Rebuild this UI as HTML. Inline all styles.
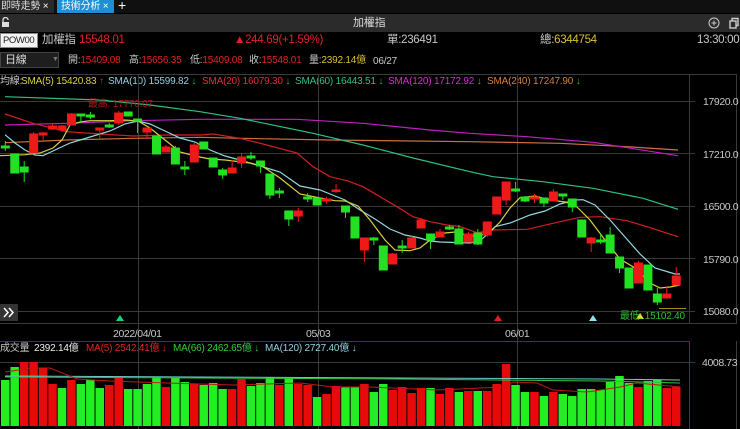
<!DOCTYPE html>
<html><head><meta charset="utf-8"><style>
*{margin:0;padding:0;box-sizing:border-box}
body{width:740px;height:429px;background:#000;overflow:hidden;font-family:"Liberation Sans","Noto Sans CJK TC",sans-serif;font-size:10px;letter-spacing:-0.2px;color:#c8c8c8;position:relative}
.a{position:absolute;white-space:nowrap;line-height:13px}
.r{color:#e02424}.y{color:#d8c030}.g{color:#20c040}
.b{font-size:11.5px;letter-spacing:-0.3px}
</style></head><body>
<div class="a" style="left:0;top:0;width:740px;height:13px;background:#101010"></div>
<div class="a" style="left:0;top:0;width:54px;height:13px;background:#2a2a2a;color:#ddd;padding-left:1px">即時走勢 <span style="color:#fff">×</span></div>
<div class="a" style="left:57px;top:0;width:57px;height:13px;background:#1d8fd2;color:#fff;padding-left:4px">技術分析 ×</div>
<div class="a" style="left:118px;top:-1px;color:#fff;font-size:14px">+</div>
<div class="a" style="left:0;top:14px;width:740px;height:18px;background:#2b2b2b"></div>
<svg class="a" style="left:1px;top:17px" width="9" height="11"><rect x="1" y="5" width="7" height="5" fill="#ddd"/><path d="M2 5V3a2.5 2.5 0 0 1 5 0" stroke="#ddd" fill="none" stroke-width="1.3"/></svg>
<div class="a" style="left:353px;top:17px;color:#ddd;font-size:11px">加權指</div>
<svg class="a" style="left:708px;top:17px" width="32" height="12"><circle cx="6" cy="6" r="5" stroke="#ccc" fill="none"/><path d="M3.5 6h5M6 3.5v5" stroke="#ccc"/><rect x="22" y="4" width="6" height="7" stroke="#ccc" fill="none" stroke-width="1.4"/><path d="M24 4V1.5h6v7h-2" stroke="#ccc" fill="none" stroke-width="1.4"/></svg>
<div class="a" style="left:0;top:33px;width:38px;height:15px;background:#f4f4f4;border:1px solid #888;color:#222;padding-left:2px;line-height:13px;font-size:9.5px;letter-spacing:-0.4px">POW00</div>
<div class="a b" style="left:42px;top:34px">加權指</div>
<div class="a b r" style="left:79px;top:34px">15548.01</div>
<div class="a b r" style="left:234px;top:34px">▲244.69(+1.59%)</div>
<div class="a b" style="left:387px;top:34px">單:236491</div>
<div class="a b" style="left:540px;top:34px">總:<span class="y">6344754</span></div>
<div class="a b" style="left:697px;top:34px">13:30:00</div>
<div class="a" style="left:0;top:52px;width:59px;height:16px;background:#1e1e1e;border:1px solid #444;padding-left:4px;line-height:14px;color:#ddd;font-size:11px">日線<span style="position:absolute;left:51px;color:#777;font-size:7px">▼</span></div>
<div class="a" style="left:68px;top:54px">開:<span class="r">15409.08</span></div>
<div class="a" style="left:129px;top:54px">高:<span class="r">15656.35</span></div>
<div class="a" style="left:190px;top:54px">低:<span class="r">15409.08</span></div>
<div class="a" style="left:249px;top:54px">收:<span class="r">15548.01</span></div>
<div class="a" style="left:309px;top:54px">量:<span class="y">2392.14億</span></div>
<div class="a" style="left:373px;top:55px">06/27</div>
<div class="a" style="left:0;top:75px">均線:</div>
<div class="a" style="left:21px;top:75px;color:#d8d040">SMA(5) 15420.83 <span class="r">↑</span></div>
<div class="a" style="left:108px;top:75px;color:#90d0e0">SMA(10) 15599.82 <span class="g">↓</span></div>
<div class="a" style="left:202px;top:75px;color:#e03030">SMA(20) 16079.30 <span class="g">↓</span></div>
<div class="a" style="left:295px;top:75px;color:#30c080">SMA(60) 16443.51 <span class="g">↓</span></div>
<div class="a" style="left:388px;top:75px;color:#d030d0">SMA(120) 17172.92 <span class="g">↓</span></div>
<div class="a" style="left:487px;top:75px;color:#d08040">SMA(240) 17247.90 <span class="g">↓</span></div>

<svg class="a" style="left:0;top:0" width="740" height="429">
<g stroke="#3a3a3a" stroke-width="1">
<path d="M0 74.5H737M0 101.5H695M0 153.5H695M0 206.5H695M0 258.5H695M0 311.5H695M0 323.5H737M138.5 74V429M318.5 74V429M517.5 74V429M0 362.5H695"/>
<path d="M689.5 74V324M736.5 74V324"/>
</g>
<path d="M0 341.5H689.5V429" stroke="#6a1e5a" fill="none"/>
<path d="M736.5 341V429" stroke="#3a3a3a"/>
<g fill="none" stroke-width="1.2">
<polyline stroke="#d07040" points="5,142.7 67,140 133,138.3 200,137.3 240,138.3 330,140 470,141.7 560,143.3 627,146.7 678,150"/>
<polyline stroke="#c020c0" points="5,125 67,123.3 133,120.7 200,119.3 297,119.3 363,123.3 430,130 470,133.3 527,136.7 593,142.3 678,155.7"/>
<polyline stroke="#30c080" points="5,96.7 100,100 150,105 200,111.7 240,118.3 313,133.3 363,145 413,158 470,171.7 493,176.7 543,181.7 593,188.3 643,198.3 678,209.3"/>
<polyline stroke="#d02020" points="5,114 33,123.3 67,131.7 100,134 133,136 167,135 200,135 213,134 240,138.3 263,144 297,153 313,166.7 330,176.7 347,180.7 363,186.7 380,196.7 397,206.7 413,216.7 430,221.7 447,225 460,226.5 477,232.7 493,230 527,229.3 560,221.7 580,217.3 600,216.7 627,220.7 647,226.7 678,236.7"/>
<polyline stroke="#90d8e0" points="5,134.7 15,143 25,150 35,155 43,155.7 55,150 70,143 90,137 110,131 125,124 138,121 150,124 165,131 180,138 195,142 210,150 225,156 240,160 260,166 280,172 300,186 320,190 335,196 345,200 360,210 375,219 390,229 405,235 420,238 430,241 440,242 470,243 480,241 495,226.7 510,223 530,215 545,211 560,204 575,200 583,199.7 595,205 610,220 625,237 640,254 655,268 675,274 680,274"/>
<polyline stroke="#d8d040" points="0,155.7 25,154.7 40,153 53,148 62,140 70,125 80,122 90,120.7 110,120.7 125,120 138,121 150,128 165,140 180,152 195,156 210,159 225,160 250,163 262,166 280,178 300,194 315,197 335,200.7 345,201 358,206 370,220 385,240 395,250 410,250.7 420,248 430,240 445,233 455,232 470,236 480,235.7 490,232 500,222 510,208 520,197.7 535,196 550,200 565,202 575,205 590,220 605,240 620,259 635,268 650,283 660,288 670,287 680,285"/>
</g>
<g stroke-width="1">
<g stroke="#22e022" fill="#22e022">
<path d="M5.3 141V151M14.75 154V173M24.2 161V182M80.9 114V123M90.35 112V119M109.25 123V128M128.15 112V116M137.6 119V133M156.5 136V154M175.4 146V164M184.85 161V175M203.75 142V149M213.2 158V167M222.65 168V179M251 152V160M260.45 161V173M269.9 174V199M279.35 188V198M288.8 211V226M307.7 193V202M317.15 198V205M345.5 206V218M354.95 217V238M373.85 237V245M383.3 246V270M402.2 240V253M430.55 234V249M449.45 225V230M458.9 225V244M477.8 229V245M515.6 182V192M525.05 196V202M543.95 198V207M562.85 194V200M572.3 199V212M581.75 220V237M600.65 234V244M610.1 227V253M619.55 257V273M629 268V288M647.9 265V290M657.35 288V305"/>
<rect x="1.3" y="146" width="8" height="2"/><rect x="10.75" y="154" width="8" height="19"/><rect x="20.2" y="167" width="8" height="5"/><rect x="76.9" y="114" width="8" height="2"/><rect x="86.35" y="115" width="8" height="2"/><rect x="105.25" y="125" width="8" height="2"/><rect x="124.15" y="112" width="8" height="4"/><rect x="133.6" y="119" width="8" height="2"/><rect x="152.5" y="136" width="8" height="18"/><rect x="171.4" y="148" width="8" height="16"/><rect x="180.85" y="167" width="8" height="2"/><rect x="199.75" y="142" width="8" height="7"/><rect x="209.2" y="158" width="8" height="9"/><rect x="218.65" y="170" width="8" height="5"/><rect x="247" y="156" width="8" height="2"/><rect x="256.45" y="161" width="8" height="5"/><rect x="265.9" y="174" width="8" height="21"/><rect x="275.35" y="191" width="8" height="2"/><rect x="284.8" y="211" width="8" height="8"/><rect x="303.7" y="197" width="8" height="2"/><rect x="313.15" y="198" width="8" height="7"/><rect x="341.5" y="206" width="8" height="6"/><rect x="350.95" y="217" width="8" height="21"/><rect x="369.85" y="238" width="8" height="2"/><rect x="379.3" y="246" width="8" height="24"/><rect x="398.2" y="246" width="8" height="2"/><rect x="426.55" y="234" width="8" height="6"/><rect x="445.45" y="227" width="8" height="2"/><rect x="454.9" y="229" width="8" height="15"/><rect x="473.8" y="233" width="8" height="11"/><rect x="511.6" y="189" width="8" height="2"/><rect x="521.05" y="197" width="8" height="4"/><rect x="539.95" y="198" width="8" height="5"/><rect x="558.85" y="194" width="8" height="2"/><rect x="568.3" y="199" width="8" height="8"/><rect x="577.75" y="220" width="8" height="17"/><rect x="596.65" y="240" width="8" height="2"/><rect x="606.1" y="235" width="8" height="18"/><rect x="615.55" y="257" width="8" height="11"/><rect x="625" y="268" width="8" height="20"/><rect x="643.9" y="265" width="8" height="25"/><rect x="653.35" y="294" width="8" height="8"/>
</g>
<g stroke="#ee1a1a" fill="#ee1a1a">
<path d="M33.65 132V153M43.1 132V141M52.55 123V130M62 125V132M71.45 113V125M99.8 128V140M118.7 111V125M147.05 128V139M165.95 145V152M194.3 143V162M232.1 160V173M241.55 153V168M298.25 208V222M326.6 197V204M336.05 184V193M364.4 238V262M392.75 253V264M411.65 236V248M421.1 218V228M440 229V237M468.35 232V242M487.25 222V237M496.7 197V214M506.15 182V205M534.5 194V203M553.4 189V201M591.2 237V252M638.45 261V283M666.8 286V298M676.25 267V285"/>
<rect x="29.65" y="134" width="8" height="19"/><rect x="39.1" y="133" width="8" height="2"/><rect x="48.55" y="126" width="8" height="3"/><rect x="58" y="126" width="8" height="4"/><rect x="67.45" y="114" width="8" height="11"/><rect x="95.8" y="128" width="8" height="2"/><rect x="114.7" y="113" width="8" height="10"/><rect x="143.05" y="128" width="8" height="4"/><rect x="161.95" y="147" width="8" height="5"/><rect x="190.3" y="145" width="8" height="17"/><rect x="228.1" y="168" width="8" height="5"/><rect x="237.55" y="157" width="8" height="6"/><rect x="294.25" y="211" width="8" height="5"/><rect x="322.6" y="199" width="8" height="2"/><rect x="332.05" y="190" width="8" height="1.5"/><rect x="360.4" y="238" width="8" height="12"/><rect x="388.75" y="254" width="8" height="10"/><rect x="407.65" y="238" width="8" height="10"/><rect x="417.1" y="220" width="8" height="8"/><rect x="436" y="232" width="8" height="5"/><rect x="464.35" y="234" width="8" height="8"/><rect x="483.25" y="222" width="8" height="13"/><rect x="492.7" y="197" width="8" height="17"/><rect x="502.15" y="182" width="8" height="18"/><rect x="530.5" y="197" width="8" height="2"/><rect x="549.4" y="192" width="8" height="9"/><rect x="587.2" y="238" width="8" height="5"/><rect x="634.45" y="263" width="8" height="20"/><rect x="662.8" y="294" width="8" height="4"/><rect x="672.25" y="276" width="8" height="9"/>
</g>
</g>
<path d="M659 308.5H686" stroke="#a09020"/>
<path d="M116 321l4-6 4 6z" fill="#20d080"/><path d="M494 321l4-6 4 6z" fill="#e02020"/><path d="M589 321l4-6 4 6z" fill="#90e0f0"/><path d="M636 319l4-6 4 6z" fill="#e0e020"/>
<text x="88" y="107" fill="#b01818" font-size="10" letter-spacing="-0.2" font-family="Liberation Sans,Noto Sans CJK TC,sans-serif">最高: 17770.07</text>
<text x="620" y="319" fill="#30c030" font-size="10" letter-spacing="-0.2" font-family="Liberation Sans,Noto Sans CJK TC,sans-serif">最低: 15102.40</text>
<g fill="#c8c8c8" font-size="10.5" letter-spacing="-0.4" font-family="Liberation Sans,sans-serif">
<text x="703" y="105">17920.0</text><text x="703" y="158">17210.0</text><text x="703" y="210">16500.0</text><text x="703" y="263">15790.0</text><text x="703" y="315">15080.0</text><text x="702" y="366">4008.73</text>
<text x="113" y="337">2022/04/01</text><text x="306" y="337">05/03</text><text x="505" y="337">06/01</text>
</g>
<rect x="0" y="304" width="18" height="17" fill="#333"/>
<path d="M4 308l4 4.5-4 4.5M9 308l4 4.5-4 4.5" stroke="#fff" stroke-width="1.5" fill="none"/>
<g>
<g fill="#22ee22"><rect x="1" y="380" width="8.5" height="46"/><rect x="10.45" y="367" width="8.5" height="59"/><rect x="57.7" y="388" width="8.5" height="38"/><rect x="76.6" y="384" width="8.5" height="42"/><rect x="86.05" y="380" width="8.5" height="46"/><rect x="95.5" y="388" width="8.5" height="38"/><rect x="123.85" y="389" width="8.5" height="37"/><rect x="133.3" y="389" width="8.5" height="37"/><rect x="142.75" y="384" width="8.5" height="42"/><rect x="152.2" y="377" width="8.5" height="49"/><rect x="171.1" y="378" width="8.5" height="48"/><rect x="180.55" y="382" width="8.5" height="44"/><rect x="199.45" y="385" width="8.5" height="41"/><rect x="208.9" y="383" width="8.5" height="43"/><rect x="218.35" y="389" width="8.5" height="37"/><rect x="246.7" y="386" width="8.5" height="40"/><rect x="256.15" y="383" width="8.5" height="43"/><rect x="265.6" y="377" width="8.5" height="49"/><rect x="284.5" y="378" width="8.5" height="48"/><rect x="312.85" y="397" width="8.5" height="29"/><rect x="341.2" y="387" width="8.5" height="39"/><rect x="350.65" y="387" width="8.5" height="39"/><rect x="369.55" y="392" width="8.5" height="34"/><rect x="379" y="384" width="8.5" height="42"/><rect x="426.25" y="388" width="8.5" height="38"/><rect x="454.6" y="392" width="8.5" height="34"/><rect x="473.5" y="391" width="8.5" height="35"/><rect x="511.3" y="385" width="8.5" height="41"/><rect x="520.75" y="392" width="8.5" height="34"/><rect x="539.65" y="396" width="8.5" height="30"/><rect x="558.55" y="394" width="8.5" height="32"/><rect x="568" y="396" width="8.5" height="30"/><rect x="577.45" y="389" width="8.5" height="37"/><rect x="586.9" y="389" width="8.5" height="37"/><rect x="596.35" y="390" width="8.5" height="36"/><rect x="605.8" y="382" width="8.5" height="44"/><rect x="615.25" y="376" width="8.5" height="50"/><rect x="624.7" y="383" width="8.5" height="43"/><rect x="643.6" y="381" width="8.5" height="45"/><rect x="653.05" y="380" width="8.5" height="46"/></g>
<g fill="#e80a0a"><rect x="19.9" y="362" width="8.5" height="64"/><rect x="29.35" y="362" width="8.5" height="64"/><rect x="38.8" y="368" width="8.5" height="58"/><rect x="48.25" y="384" width="8.5" height="42"/><rect x="67.15" y="380" width="8.5" height="46"/><rect x="104.95" y="385" width="8.5" height="41"/><rect x="114.4" y="378" width="8.5" height="48"/><rect x="161.65" y="387" width="8.5" height="39"/><rect x="190" y="384" width="8.5" height="42"/><rect x="227.8" y="389" width="8.5" height="37"/><rect x="237.25" y="379" width="8.5" height="47"/><rect x="275.05" y="385" width="8.5" height="41"/><rect x="293.95" y="384" width="8.5" height="42"/><rect x="303.4" y="385" width="8.5" height="41"/><rect x="322.3" y="394" width="8.5" height="32"/><rect x="331.75" y="386" width="8.5" height="40"/><rect x="360.1" y="384" width="8.5" height="42"/><rect x="388.45" y="390" width="8.5" height="36"/><rect x="397.9" y="387" width="8.5" height="39"/><rect x="407.35" y="393" width="8.5" height="33"/><rect x="416.8" y="388" width="8.5" height="38"/><rect x="435.7" y="394" width="8.5" height="32"/><rect x="445.15" y="388" width="8.5" height="38"/><rect x="464.05" y="391" width="8.5" height="35"/><rect x="482.95" y="391" width="8.5" height="35"/><rect x="492.4" y="384" width="8.5" height="42"/><rect x="501.85" y="364" width="8.5" height="62"/><rect x="530.2" y="392" width="8.5" height="34"/><rect x="549.1" y="392" width="8.5" height="34"/><rect x="634.15" y="387" width="8.5" height="39"/><rect x="662.5" y="388" width="8.5" height="38"/><rect x="671.95" y="387" width="8.5" height="39"/></g>
</g>
<g fill="none" stroke-width="1">
<polyline stroke="#70c8c0" points="5,376 200,377 400,378 600,379 680,380"/>
<polyline stroke="#30c040" points="5,377 200,378 400,379 600,381 680,383"/>
<polyline stroke="#c01818" points="5,372 33,368 50,368 77,379 110,381 167,383 233,385 300,383 333,387 370,387 437,390 503,387 513,382 537,383 553,390 587,392 620,387 637,383 680,387"/>
</g>
</svg>
<div class="a" style="left:0;top:342px">成交量</div>
<div class="a" style="left:34px;top:342px;color:#eee">2392.14億</div>
<div class="a r" style="left:86px;top:342px">MA(5) 2542.41億 ↓</div>
<div class="a" style="left:173px;top:342px;color:#30d030">MA(66) 2462.65億 ↓</div>
<div class="a" style="left:265px;top:342px;color:#90d0e0">MA(120) 2727.40億 ↓</div>
</body></html>
